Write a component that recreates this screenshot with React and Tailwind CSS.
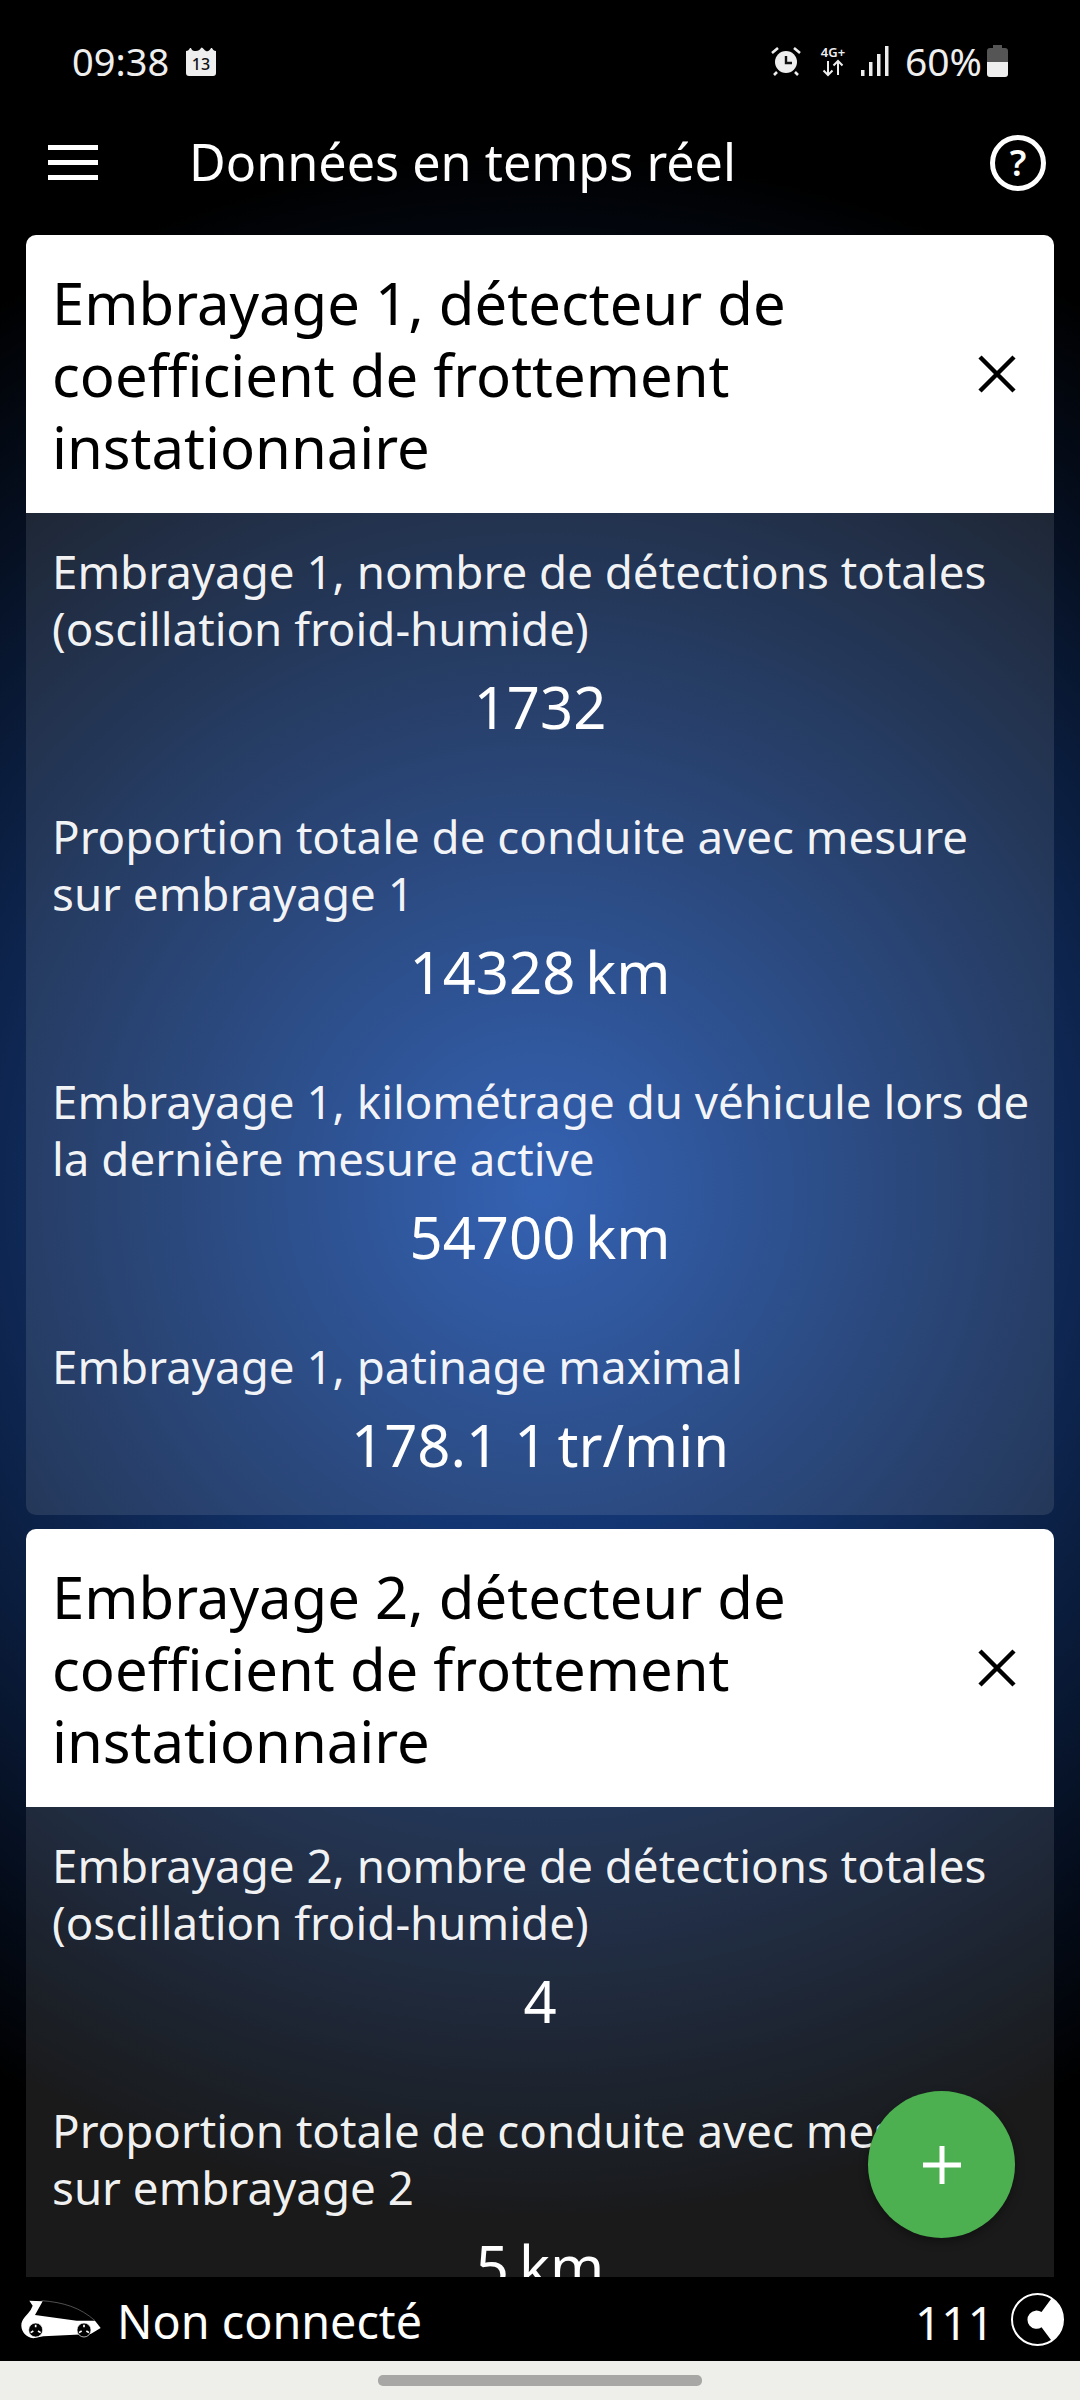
const FONT = "font-['Noto_Sans',sans-serif]";

function Calendar() {
  return (
    <svg width="30" height="30" viewBox="0 0 30 30" className="block">
      <path d="M0 5c2 0 3-1 4-3h1c1 3 3 3 5 3s4-1 5-3 3 2 5 3 4-1 5-3h1c1 2 2 3 4 3v22a3 3 0 0 1-3 3H3a3 3 0 0 1-3-3z" fill="#eee" />
      <text x="15" y="24" textAnchor="middle" fontSize="16" fontWeight="500" fill="#111" fontFamily="Noto Sans">13</text>
    </svg>
  );
}

function StatusIcons() {
  return (
    <div className="flex items-center">
      <svg width="30" height="30" viewBox="0 0 30 30" className="block mr-[17px]">
        <circle cx="15" cy="16" r="11" fill="#eee" />
        <path d="M15 10v7h6" stroke="#111" strokeWidth="2.4" fill="none" />
        <path d="M1 7l6-5M29 7l-6-5M6 26l-3 3M24 26l3 3" stroke="#eee" strokeWidth="2.6" fill="none" />
      </svg>
      <svg width="31" height="32" viewBox="0 0 31 32" className="block mr-[12px]">
        <text x="15" y="12" textAnchor="middle" fontSize="13" fontWeight="600" fill="#eee" fontFamily="Noto Sans">4G+</text>
        <path d="M10 16v14M5.5 25.500L10 30l4.500-4.500M20 30V16M15.500 20.500L20 16l4.500 4.500" stroke="#eee" strokeWidth="2" fill="none" />
      </svg>
      <svg width="28" height="30" viewBox="0 0 28 30" className="block mr-[16px]">
        <rect x="0" y="24" width="3.500" height="6" fill="#eee" />
        <rect x="8" y="16" width="3.500" height="14" fill="#eee" />
        <rect x="16" y="8" width="3.500" height="22" fill="#eee" />
        <rect x="24" y="0" width="3.500" height="30" fill="#eee" />
      </svg>
      <span className="text-[39px] leading-none text-[#eee] mr-[5px] mb-[2px]">60%</span>
      <svg width="21" height="32" viewBox="0 0 21 32" className="block">
        <path d="M6 0h9v3h3a3 3 0 0 1 3 3v11H0V6a3 3 0 0 1 3-3h3z" fill="#555" />
        <path d="M0 17h21v12a3 3 0 0 1-3 3H3a3 3 0 0 1-3-3z" fill="#eee" />
      </svg>
    </div>
  );
}

function Metric({ label, value, unit }) {
  return (
    <div className="mb-[65px] last:mb-0">
      <div className="text-[45.7px] leading-[57px] text-white/95 [font-variant-ligatures:none]">{label}</div>
      <div className="flex justify-center gap-[10px] text-[58px] leading-[72px] text-white mt-[14px] mr-[17px]">
        <span>{value}</span>
        {unit && <span>{unit}</span>}
      </div>
    </div>
  );
}

function Card({ title, metrics }) {
  return (
    <section className="rounded-[10px] overflow-hidden bg-white/10 mb-[14px]">
      <header className="bg-white text-black h-[278px] pl-[26px] pr-[34px] pt-[2px] flex items-center justify-between">
        <h2 className="text-[58px] leading-[72px] font-normal w-[800px] [font-variant-ligatures:none]">{title}</h2>
        <svg width="38" height="38" viewBox="0 0 38 38" className="block mr-[4px] mb-[2px]">
          <path d="M2 2l34 34M36 2L2 36" stroke="#000" strokeWidth="4.500" fill="none" />
        </svg>
      </header>
      <div className="pl-[26px] pr-[9px] pt-[30px] pb-[34px]">
        {metrics.map((m) => (
          <Metric key={m.label} {...m} />
        ))}
      </div>
    </section>
  );
}

export default function App() {
  return (
    <div className={`w-[1080px] h-[2400px] flex flex-col overflow-hidden relative ${FONT} bg-[radial-gradient(circle_1040px_at_540px_1190px,#1d50aa_0%,#000000_100%)]`}>
      <div className="h-[120px] flex items-center justify-between pl-[72px] pr-[72px] pt-[2px] shrink-0 text-[#eee]">
        <div className="flex items-center gap-[17px]">
          <span className="text-[38px] leading-none">09:38</span>
          <Calendar />
        </div>
        <StatusIcons />
      </div>
      <div className="h-[115px] flex items-center pl-[48px] pr-[34px] shrink-0 pb-[30px]">
        <div className="w-[50px] flex flex-col gap-[10px] mr-[91px]">
          <div className="h-[5px] bg-white" />
          <div className="h-[5px] bg-white" />
          <div className="h-[5px] bg-white" />
        </div>
        <h1 className="flex-1 text-[50.3px] leading-none font-normal text-white">Données en temps réel</h1>
        <svg width="56" height="56" viewBox="0 0 56 56" className="block">
          <circle cx="28" cy="28" r="25.500" stroke="#fff" strokeWidth="5" fill="none" />
          <text x="28" y="41" textAnchor="middle" fontSize="36" fontWeight="600" fill="#fff" fontFamily="Noto Sans">?</text>
        </svg>
      </div>
      <main className="flex-1 min-h-0 overflow-hidden px-[26px]">
        <Card
          title="Embrayage 1, détecteur de coefficient de frottement instationnaire"
          metrics={[
            { label: "Embrayage 1, nombre de détections totales (oscillation froid-humide)", value: "1732" },
            { label: "Proportion totale de conduite avec mesure sur embrayage 1", value: "14328", unit: "km" },
            { label: "Embrayage 1, kilométrage du véhicule lors de la dernière mesure active", value: "54700", unit: "km" },
            { label: "Embrayage 1, patinage maximal", value: "178.1 1", unit: "tr/min" },
          ]}
        />
        <Card
          title="Embrayage 2, détecteur de coefficient de frottement instationnaire"
          metrics={[
            { label: "Embrayage 2, nombre de détections totales (oscillation froid-humide)", value: "4" },
            { label: "Proportion totale de conduite avec mesure sur embrayage 2", value: "5", unit: "km" },
          ]}
        />
      </main>
      <div className="h-[84px] bg-black shrink-0 flex items-center justify-between pl-[20px] pr-[16px] text-white">
        <div className="flex items-center gap-[15px]">
          <svg width="82" height="40" viewBox="60 85 246 120" className="block">
            <path d="M88 90L128 92L105 133L230 150L285 150L302 172L272 190L130 197L100 203C78 198 65 185 64 165C64 145 80 135 92 118L98 105Z" fill="#fff" />
            <path d="M125 90C190 95 240 110 285 150" stroke="#777" strokeWidth="2" fill="none" />
            <circle cx="107" cy="178" r="21" fill="#000" stroke="#fff" strokeWidth="2" />
            <circle cx="252" cy="178" r="21" fill="#000" stroke="#fff" strokeWidth="2" />
            <path d="M107 162v8M92 186l8-5M122 186l-8-5M252 162v8M237 186l8-5M267 186l-8-5" stroke="#fff" strokeWidth="5" />
          </svg>
          <span className="text-[46.7px] leading-none mt-[5px]">Non connecté</span>
        </div>
        <div className="flex items-center gap-[17px]">
          <span className="text-[46px] leading-none mt-[5px]">111</span>
          <svg width="53" height="53" viewBox="396 68 158 158" className="block">
            <circle cx="475" cy="147" r="76" stroke="#fff" strokeWidth="6" fill="none" />
            <path d="M517 84A76 76 0 0 1 517 210L487 170A27 27 0 1 1 487 125Z" fill="#fff" />
          </svg>
        </div>
      </div>
      <div className="h-[39px] bg-[#eeefeb] shrink-0 flex items-center justify-center">
        <div className="w-[324px] h-[11px] rounded-[5px] bg-[#a7a7a5]" />
      </div>
      <div className="absolute left-[868px] top-[2091px] w-[147px] h-[147px] rounded-full bg-[#4caf50] shadow-[0_4px_10px_rgba(0,0,0,0.35)] flex items-center justify-center">
        <svg width="38" height="38" viewBox="0 0 38 38" className="block">
          <path d="M19 0v38M0 19h38" stroke="#fff" strokeWidth="5" fill="none" />
        </svg>
      </div>
    </div>
  );
}
